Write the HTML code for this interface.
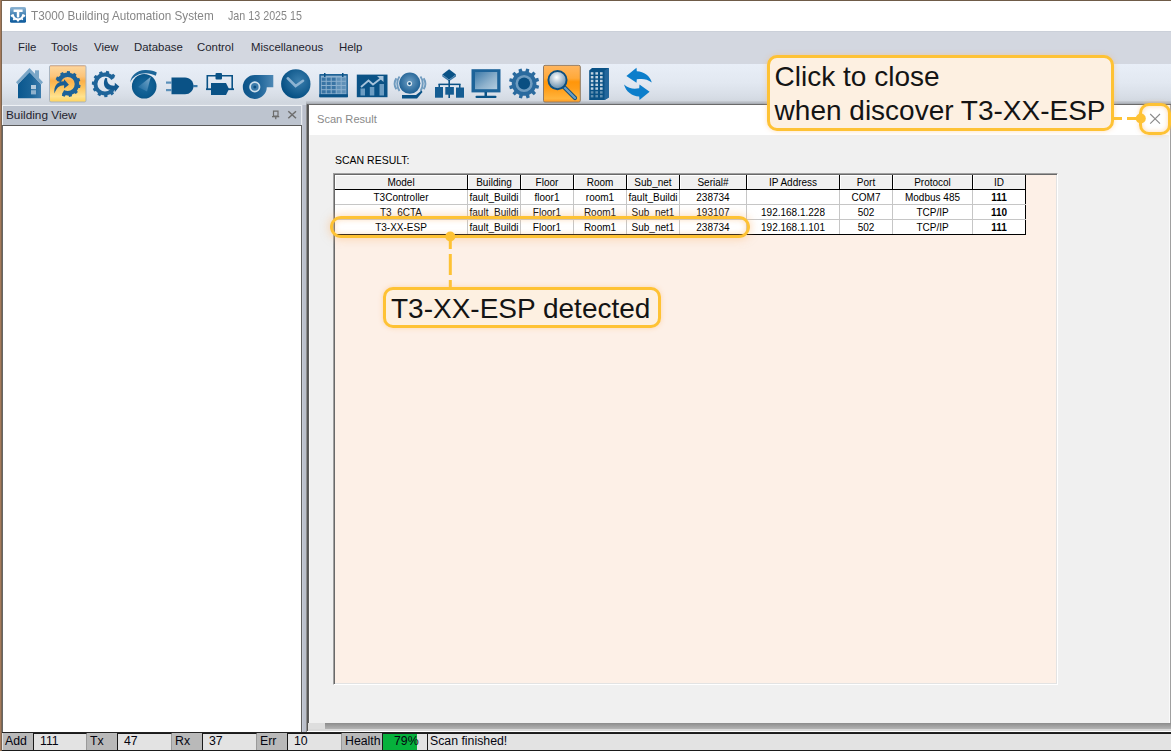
<!DOCTYPE html>
<html><head><meta charset="utf-8">
<style>
*{margin:0;padding:0;box-sizing:border-box}
html,body{width:1171px;height:751px;overflow:hidden;background:#fff;font-family:"Liberation Sans",sans-serif}
.a{position:absolute}
.t{position:absolute;white-space:nowrap;line-height:1}
#desk-top{left:0;top:0;width:1171px;height:1px;background:#6f5b47}
#desk-left{left:0;top:0;width:2px;height:751px;background:linear-gradient(90deg,#a57a5a 50%,#7d6650 50%)}
#title{left:2px;top:1px;width:1169px;height:30px;background:#fff}
#menubar{left:2px;top:31px;width:1169px;height:33px;background:#d3d7e0;border-top:1px solid #cbd0d9}
.menu{font-size:11.4px;color:#1f1f2e;top:42px}
#toolbar{left:2px;top:64px;width:1169px;height:42px;background:linear-gradient(#e8eef8 0,#e7edf6 10%,#e2e8f1 45%,#d8dee7 75%,#d0d6de 92%,#d3d8e0 100%)}
#tbdark{left:306px;top:101px;width:865px;height:4px;background:linear-gradient(#c9ced6,#b3b8bf 50%,#8e9298 100%)}
#bvhead{left:2px;top:105px;width:300px;height:21px;background:#bdc4cf;border-top:1px solid #eef1f5;border-right:1px solid #e6e9ee;border-left:1px solid #eef1f5}
#bvbody{left:2px;top:125px;width:300px;height:607px;background:#fff;border-top:1px solid #5a5a5a;border-right:1px solid #5f5f5f;border-left:1px solid #666}
#splitter{left:302px;top:105px;width:5px;height:627px;background:linear-gradient(90deg,#c5cbd6 0,#c5cbd6 20%,#bbc0cc 20%,#bbc0cc 80%,#8e8e8e 80%)}
#dlg{left:307px;top:104px;width:864px;height:627px;background:#f0f0f0;border-left:1px solid #555;border-top:1px solid #6a6a6a;box-shadow:inset -1px 0 0 #a0a0a0,inset -2px 0 0 #fafafa,inset 1px 0 0 #5c5c5c,inset 2px 0 0 #f6f6f6}
#dlgtitle{left:309px;top:105px;width:860px;height:30px;background:#fff}
#dlgbottom{left:308px;top:723px;width:863px;height:9px;background:linear-gradient(#8c8c8c 0,#a4a4a4 40%,#b4b4b4 66%,#d9d9d9 67%,#d9d9d9 88%,#fff 89%)}
#list{left:333px;top:173px;width:725px;height:512px;background:#fdf0e7;border-top:1px solid #a0a0a0;border-left:1px solid #a0a0a0;border-right:1px solid #fff;border-bottom:1px solid #fff;box-shadow:inset 1px 1px 0 #696969,inset -1px -1px 0 #e3e3e3}
#status{left:2px;top:732px;width:1169px;height:19px;background:#e3e3e3;border-top:1px solid #222}
.tc{position:absolute;height:15px;display:flex;justify-content:center;align-items:center;overflow:hidden;font-size:10px;color:#000;white-space:nowrap;line-height:15px}
.st{top:735px;font-size:12.3px;color:#050510}
#scrl{left:308px;top:723px;width:17px;height:6px;background:#dedede}
.sl{position:absolute;top:733px;height:18px;background:#b7b7b7;font-size:12.5px;color:#10103a;padding-left:2px;line-height:18px}
.sv{position:absolute;top:733px;height:18px;background:#e3e3e3;font-size:12.5px;color:#10103a;line-height:18px;border-left:1px solid #222;border-top:1px solid #222}
</style></head><body>
<div id="desk-top" class="a"></div>
<div id="desk-left" class="a"></div>
<div id="title" class="a"></div>
<div class="t" style="left:31px;top:9.8px;font-size:12.7px;color:#868686;transform:scaleX(0.925);transform-origin:0 0">T3000 Building Automation System</div>
<div class="t" style="left:228px;top:9.8px;font-size:12.7px;color:#868686;transform:scaleX(0.845);transform-origin:0 0">Jan 13 2025 15</div>
<svg class="a" style="left:9px;top:6px" width="19" height="18" viewBox="9 6 19 18">
<defs><linearGradient id="lg" x1="0" y1="0" x2="0" y2="1"><stop offset="0" stop-color="#8fb5d3"/><stop offset="0.45" stop-color="#4a87b8"/><stop offset="1" stop-color="#0a589b"/></linearGradient></defs>
<rect x="10" y="7" width="16" height="15.8" rx="1.6" fill="url(#lg)"/>
<path d="M13.6,9.6 L22.6,9.6 L22.6,12.1 L19.3,12.1 L19.3,17.6 L16.8,17.6 L16.8,12.1 L13.6,12.1Z" fill="#fff"/>
<path d="M24.30,14.20 L24.29,14.53 L24.27,14.86 L25.31,15.36 L25.24,15.74 L25.15,16.12 L25.04,16.49 L24.91,16.85 L23.76,16.76 L23.61,17.06 L23.46,17.35 L23.28,17.63 L23.10,17.90 L22.90,18.16 L22.68,18.42 L23.23,19.43 L22.95,19.70 L22.66,19.95 L22.35,20.19 L21.43,19.48 L21.15,19.66 L20.86,19.81 L20.56,19.96 L20.26,20.08 L19.95,20.19 L19.63,20.29 L19.31,20.36 L18.99,20.42 L18.77,21.56 L18.39,21.59 L18.00,21.60 L17.61,21.59 L17.23,21.56 L17.01,20.42 L16.69,20.36 L16.37,20.29 L16.05,20.19 L15.74,20.08 L15.44,19.96 L15.14,19.81 L14.85,19.66 L13.97,20.41 L13.65,20.19 L13.34,19.95 L13.05,19.70 L12.77,19.43 L13.32,18.42 L13.10,18.16 L12.90,17.90 L12.72,17.63 L12.54,17.35 L12.39,17.06 L12.24,16.76 L11.09,16.85 L10.96,16.49 L10.85,16.12 L10.76,15.74 L10.69,15.36 L11.73,14.86 L11.71,14.53 L11.70,14.20 L13.90,14.20 L13.91,14.41 L13.92,14.63 L13.95,14.84 L13.99,15.05 L14.04,15.26 L14.10,15.47 L14.17,15.67 L14.25,15.87 L14.35,16.06 L14.45,16.25 L14.56,16.43 L14.68,16.61 L14.81,16.78 L14.95,16.94 L15.10,17.10 L15.26,17.25 L15.42,17.39 L15.59,17.52 L15.77,17.64 L15.95,17.75 L16.14,17.85 L16.33,17.95 L16.53,18.03 L16.73,18.10 L16.94,18.16 L17.15,18.21 L17.36,18.25 L17.57,18.28 L17.79,18.29 L18.00,18.30 L18.21,18.29 L18.43,18.28 L18.64,18.25 L18.85,18.21 L19.06,18.16 L19.27,18.10 L19.47,18.03 L19.67,17.95 L19.86,17.85 L20.05,17.75 L20.23,17.64 L20.41,17.52 L20.58,17.39 L20.74,17.25 L20.90,17.10 L21.05,16.94 L21.19,16.78 L21.32,16.61 L21.44,16.43 L21.55,16.25 L21.65,16.06 L21.75,15.87 L21.83,15.67 L21.90,15.47 L21.96,15.26 L22.01,15.05 L22.05,14.84 L22.08,14.63 L22.09,14.41 L22.10,14.20Z" fill="#fff"/>
</svg>
<div id="menubar" class="a"></div>
<div class="t menu" style="left:18px">File</div>
<div class="t menu" style="left:51px">Tools</div>
<div class="t menu" style="left:94px">View</div>
<div class="t menu" style="left:134px">Database</div>
<div class="t menu" style="left:197px">Control</div>
<div class="t menu" style="left:251px">Miscellaneous</div>
<div class="t menu" style="left:339px">Help</div>
<div id="toolbar" class="a"></div>
<div id="tbdark" class="a"></div>
<!--ICONS-->
<svg class="a" style="left:0;top:60px" width="700" height="46" viewBox="0 60 700 46">
<defs>
<linearGradient id="hb1" x1="0" y1="0" x2="0" y2="1">
 <stop offset="0" stop-color="#fdd8a0"/><stop offset="0.3" stop-color="#fcc47a"/><stop offset="0.42" stop-color="#fbb04a"/>
 <stop offset="0.6" stop-color="#fdc45e"/><stop offset="0.85" stop-color="#ffe28e"/><stop offset="1" stop-color="#ffd35c"/>
</linearGradient>
<linearGradient id="hb2" x1="0" y1="0" x2="0" y2="1">
 <stop offset="0" stop-color="#ffb660"/><stop offset="0.35" stop-color="#ffa93a"/><stop offset="0.45" stop-color="#ff960a"/>
 <stop offset="0.62" stop-color="#ff9c16"/><stop offset="0.9" stop-color="#ffb43c"/><stop offset="1" stop-color="#ff9a20"/>
</linearGradient>
<linearGradient id="blu" x1="0" y1="0" x2="0" y2="1">
 <stop offset="0" stop-color="#3a77a6"/><stop offset="1" stop-color="#0d5488"/>
</linearGradient>
<linearGradient id="blu2" x1="0" y1="0" x2="1" y2="1">
 <stop offset="0" stop-color="#2f6f9f"/><stop offset="1" stop-color="#0a4f82"/>
</linearGradient>
<radialGradient id="knob" cx="0.6" cy="0.4" r="0.6">
 <stop offset="0" stop-color="#3b7fae"/><stop offset="1" stop-color="#065084"/>
</radialGradient>
<radialGradient id="bell" cx="0.5" cy="0.45" r="0.55">
 <stop offset="0" stop-color="#6e9fc4"/><stop offset="1" stop-color="#1d5f93"/>
</radialGradient>
<linearGradient id="scr" x1="0" y1="0" x2="1" y2="1">
 <stop offset="0" stop-color="#3d7aa9"/><stop offset="0.6" stop-color="#8fb2cd"/><stop offset="1" stop-color="#b3cde0"/>
</linearGradient>
<radialGradient id="lens" cx="0.45" cy="0.35" r="0.6">
 <stop offset="0" stop-color="#ffffff"/><stop offset="0.5" stop-color="#b5c7d6"/><stop offset="1" stop-color="#6c93b2"/>
</radialGradient>
</defs>
<linearGradient id="hm" x1="0" y1="0" x2="1" y2="0"><stop offset="0" stop-color="#0a578e"/><stop offset="0.6" stop-color="#1c6599"/><stop offset="1" stop-color="#3d7cad"/></linearGradient>
<rect x="35" y="70.3" width="4" height="8" fill="#7aa6c7"/>
<path d="M16,82.2 L29.5,68 L43,82.2 L41.2,84.3 L29.5,72.3 L17.8,84.3Z" fill="#7aa6c7"/>
<path d="M18,84.3 L29.5,72.3 L41,84.3 L41,98.3 L18,98.3Z" fill="url(#hm)"/>
<rect x="31" y="85" width="5" height="4.2" fill="#b5cadb"/><rect x="31" y="90.2" width="5" height="4.2" fill="#8fb1cc"/>
<rect x="49.5" y="65.5" width="36.5" height="36.5" rx="1.5" fill="url(#hb1)" stroke="#a9b4c0" stroke-width="1"/>
<rect x="50" y="65.5" width="35.5" height="1" fill="#e9b184"/>
<mask id="m2" maskUnits="userSpaceOnUse" x="40" y="60" width="60" height="46"><rect x="40" y="60" width="60" height="46" fill="#fff"/><path d="M67.7,84 L48.4,78.8 L46,96 L57.7,101.3Z" fill="#000"/></mask>
<path d="M79.09,84.57 L80.64,85.24 L80.05,88.07 L78.35,88.06 L77.97,88.96 L77.50,89.82 L76.97,90.63 L77.91,92.04 L75.89,94.10 L74.47,93.17 L73.66,93.72 L72.80,94.19 L71.91,94.59 L71.95,96.29 L69.13,96.92 L68.43,95.38 L67.46,95.40 L66.48,95.33 L65.52,95.19 L64.63,96.63 L61.91,95.64 L62.17,93.97 L61.33,93.46 L60.55,92.88 L59.81,92.23 L58.29,92.97 L56.54,90.67 L57.66,89.39 L57.23,88.51 L56.88,87.60 L56.61,86.66 L54.93,86.45 L54.71,83.57 L56.34,83.11 L56.45,82.14 L56.65,81.18 L56.94,80.25 L55.63,79.16 L57.00,76.62 L58.62,77.10 L59.25,76.35 L59.93,75.66 L60.67,75.02 L60.16,73.41 L62.69,72.00 L63.79,73.29 L64.72,73.00 L65.68,72.78 L66.64,72.65 L67.09,71.01 L69.97,71.20 L70.20,72.88 L71.15,73.13 L72.06,73.47 L72.95,73.88 L74.21,72.74 L76.53,74.46 L75.82,76.00 L76.47,76.72 L77.06,77.50 L77.59,78.32 L79.26,78.05 L80.29,80.75 L78.86,81.66 L79.02,82.62 L79.09,83.59Z M60.70,84.00 a7.0,7.0 0 1,0 14.0,0 a7.0,7.0 0 1,0 -14.0,0Z" fill="#1e6399" fill-rule="evenodd" mask="url(#m2)"/>
<path d="M54.5,93.5 C53.5,86 57,81.6 64,81.3 L64.1,79.2 L68.9,84.7 L64.1,88.6 L64.1,85.2 C59,85.3 56.5,88 54.5,93.5Z" fill="#1a5e94"/>
<mask id="m3" maskUnits="userSpaceOnUse" x="80" y="60" width="50" height="46"><rect x="80" y="60" width="50" height="46" fill="#fff"/><path d="M105,84 L122,73 L122,92Z" fill="#000"/></mask>
<path d="M116.17,86.26 L117.80,87.21 L116.78,89.96 L114.93,89.61 L114.41,90.44 L113.82,91.22 L113.17,91.95 L114.04,93.62 L111.69,95.38 L110.32,94.08 L109.44,94.50 L108.52,94.84 L107.58,95.10 L107.40,96.98 L104.47,97.19 L104.02,95.36 L103.06,95.23 L102.10,95.03 L101.17,94.74 L100.00,96.22 L97.42,94.81 L98.04,93.03 L97.29,92.40 L96.60,91.71 L95.97,90.96 L94.19,91.57 L92.78,89.00 L94.26,87.83 L93.97,86.90 L93.77,85.94 L93.64,84.97 L91.81,84.53 L92.02,81.60 L93.90,81.42 L94.16,80.48 L94.50,79.56 L94.92,78.68 L93.62,77.31 L95.38,74.96 L97.06,75.82 L97.78,75.17 L98.57,74.59 L99.40,74.07 L99.04,72.22 L101.79,71.20 L102.74,72.83 L103.70,72.67 L104.68,72.60 L105.65,72.62 L106.36,70.87 L109.22,71.49 L109.14,73.38 L110.03,73.77 L110.89,74.24 L111.70,74.78 L113.24,73.69 L115.31,75.76 L114.22,77.30 L114.76,78.11 L115.23,78.97 L115.62,79.86 L117.51,79.78 L118.13,82.65 L116.38,83.35 L116.40,84.33 L116.33,85.30Z M97.40,84.00 a7.6,7.6 0 1,0 15.2,0 a7.6,7.6 0 1,0 -15.2,0Z" fill="#1f6499" fill-rule="evenodd" mask="url(#m3)"/>
<path d="M105.2,78 C102.5,83 104,89.5 110,89.8 L114.8,89.8 L114.8,92.2 L119.3,86.6 L114.8,82.8 L114.8,85.6 C110,86.2 106.5,83 107.2,78.2Z" fill="#14598f"/>
<radialGradient id="knob2" cx="0.5" cy="0.5" r="0.5"><stop offset="0" stop-color="#1c6a9e"/><stop offset="0.85" stop-color="#0b5a8e"/><stop offset="1" stop-color="#0a5486"/></radialGradient>
<linearGradient id="cone" x1="1" y1="0" x2="0" y2="1"><stop offset="0" stop-color="#9cc0db" stop-opacity="0.9"/><stop offset="1" stop-color="#3f86b8" stop-opacity="0.2"/></linearGradient>
<circle cx="144.2" cy="86.3" r="12.3" fill="url(#knob2)"/>
<path d="M138,87 L150.8,76.8 L147,91.5Z" fill="url(#cone)"/>
<path d="M130.3,82.5 C131,75 137,70.5 145,70 C150,69.8 154.5,71 156.8,72.5 L155.8,75.8 C151,73.2 146,72.6 141,73.8 C135.5,75.2 132,78.5 130.3,82.5Z" fill="#1b6598"/>
<path d="M171.5,77.5 L185,77.5 C190,77.5 193.5,81.5 193.5,86 C193.5,90.5 190,94.3 185,94.3 L171.5,94.3Z" fill="#0a5286"/>
<rect x="166" y="81.5" width="6" height="2.2" fill="#5b90ba"/><rect x="166" y="89" width="6" height="2.2" fill="#5b90ba"/><rect x="193" y="85" width="4.5" height="2.2" fill="#3b7aaa"/>
<path d="M207.3,89.5 L207.3,75.8 L232.2,75.8 L232.2,89.5" fill="none" stroke="#0a5286" stroke-width="1.6"/>
<rect x="206" y="88.3" width="28" height="1.8" fill="#0a5286"/>
<rect x="215.5" y="73" width="6.5" height="6.5" rx="1" fill="#0a5286"/>
<path d="M211,83 L226,83 L229,89 L226,95 L211,95Z" fill="#0a5286"/>
<linearGradient id="fan" x1="0" y1="0" x2="1" y2="0"><stop offset="0" stop-color="#0b5388"/><stop offset="0.5" stop-color="#1d6398"/><stop offset="1" stop-color="#4d88b5"/></linearGradient><path d="M254.8,74.9 L273.3,74.9 L273.3,87.2 L266.8,87.2 A12,12 0 1,1 254.8,74.9Z" fill="url(#fan)"/>
<circle cx="254.8" cy="86.9" r="5.6" fill="#cfe0ec"/><circle cx="254.8" cy="86.9" r="3.8" fill="#3d7cab"/><circle cx="254.8" cy="86.9" r="1.5" fill="#0a4f82"/>
<circle cx="295.8" cy="83.9" r="14.7" fill="url(#knob)"/>
<path d="M287.8,78.3 L295.6,86 L303,80.8" fill="none" stroke="#8db4d3" stroke-width="2.6" stroke-linecap="round"/>
<rect x="319.3" y="74" width="28.6" height="23.2" rx="0.8" fill="#1f6296"/>
<rect x="320.8" y="75.7" width="25.6" height="18.7" fill="#8db1cf"/>
<rect x="321.7" y="77.6" width="4" height="3.2" fill="#2a6a9c" opacity="0.85"/>
<rect x="326.7" y="77.6" width="4" height="3.2" fill="#2a6a9c" opacity="0.85"/>
<rect x="331.7" y="77.6" width="4" height="3.2" fill="#2a6a9c" opacity="0.85"/>
<rect x="336.7" y="77.6" width="4" height="3.2" fill="#2a6a9c" opacity="0.45"/>
<rect x="341.7" y="77.6" width="4" height="3.2" fill="#2a6a9c" opacity="0.45"/>
<rect x="321.7" y="81.8" width="4" height="3.2" fill="#2a6a9c" opacity="0.85"/>
<rect x="326.7" y="81.8" width="4" height="3.2" fill="#2a6a9c" opacity="0.85"/>
<rect x="331.7" y="81.8" width="4" height="3.2" fill="#2a6a9c" opacity="0.85"/>
<rect x="336.7" y="81.8" width="4" height="3.2" fill="#2a6a9c" opacity="0.45"/>
<rect x="341.7" y="81.8" width="4" height="3.2" fill="#2a6a9c" opacity="0.45"/>
<rect x="321.7" y="86.0" width="4" height="3.2" fill="#2a6a9c" opacity="0.85"/>
<rect x="326.7" y="86.0" width="4" height="3.2" fill="#2a6a9c" opacity="0.85"/>
<rect x="331.7" y="86.0" width="4" height="3.2" fill="#2a6a9c" opacity="0.85"/>
<rect x="336.7" y="86.0" width="4" height="3.2" fill="#2a6a9c" opacity="0.45"/>
<rect x="341.7" y="86.0" width="4" height="3.2" fill="#2a6a9c" opacity="0.45"/>
<rect x="321.7" y="90.19999999999999" width="4" height="3.2" fill="#2a6a9c" opacity="0.85"/>
<rect x="326.7" y="90.19999999999999" width="4" height="3.2" fill="#2a6a9c" opacity="0.85"/>
<rect x="331.7" y="90.19999999999999" width="4" height="3.2" fill="#2a6a9c" opacity="0.85"/>
<rect x="336.7" y="90.19999999999999" width="4" height="3.2" fill="#2a6a9c" opacity="0.45"/>
<rect x="341.7" y="90.19999999999999" width="4" height="3.2" fill="#2a6a9c" opacity="0.45"/>
<rect x="319.3" y="94.3" width="28.6" height="2.9" fill="#0a5286"/><rect x="324" y="73" width="1.5" height="4" fill="#0a5286"/><rect x="342" y="73" width="1.5" height="4" fill="#0a5286"/>
<rect x="356.8" y="74.6" width="30.7" height="22.6" fill="#0a5286"/>
<rect x="360.5" y="88.5" width="4.5" height="7" fill="#6b9cc2"/><rect x="369.8" y="87" width="4.5" height="8.5" fill="#6b9cc2"/><rect x="379.5" y="84" width="4.5" height="11.5" fill="#6b9cc2"/>
<path d="M361,87 L368.5,80.5 L373,84.5 L382,77.5" fill="none" stroke="#a6c3db" stroke-width="1.8"/><path d="M377,76 L383.5,76 L383.5,82Z" fill="#a6c3db"/>
<path d="M399.5,76.5 C396.5,80.5 396.5,86.5 399.5,91 M396.3,78.3 C394.3,81.5 394.3,86 396.3,89.3" fill="none" stroke="#6f9bbf" stroke-width="1.9"/><path d="M420.5,76.5 C423.5,80.5 423.5,86.5 420.5,91 M423.7,78.3 C425.7,81.5 425.7,86 423.7,89.3" fill="none" stroke="#6f9bbf" stroke-width="1.9"/>
<circle cx="409.8" cy="83.2" r="10.6" fill="url(#bell)"/>
<circle cx="409.5" cy="83.6" r="2.6" fill="#d9e6ef"/><circle cx="409.5" cy="83.6" r="1.3" fill="#0a4f82"/>
<path d="M402,95 L416,95 L421.5,90.5 L422.5,92 L417,98.5 L402,98.5Z" fill="#0a5286"/>
<path d="M442.3,74.5 L449.1,69.3 L456,74.5 L449.1,79.8Z" fill="#0a5286"/><path d="M442.3,74.5 L442.3,76.5 L449.1,81.3 L456,76.5 L456,74.5 L449.1,79.8Z" fill="#3c79a8"/>
<rect x="448.4" y="80" width="1.6" height="18" fill="#0a5286"/><rect x="438.5" y="83.6" width="22" height="1.5" fill="#0a5286"/>
<rect x="438.5" y="84" width="1.5" height="4" fill="#0a5286"/><rect x="459" y="84" width="1.5" height="4" fill="#0a5286"/>
<rect x="435" y="87" width="8" height="10.7" fill="#145c92"/><rect x="445.3" y="87" width="8.6" height="7.7" fill="#145c92"/><rect x="456" y="87.5" width="8" height="10.2" fill="#145c92"/>
<rect x="471.5" y="69.2" width="29" height="23.2" fill="#1d6399"/><rect x="475" y="72" width="22.2" height="17.2" fill="url(#scr)"/>
<rect x="484.5" y="92" width="2.5" height="4" fill="#0a5286"/><rect x="475.5" y="95.8" width="21" height="2.3" rx="1" fill="#0a5286"/>
<path d="M536.34,84.73 L539.15,85.65 L538.37,88.73 L535.46,88.21 L535.07,89.07 L534.61,89.90 L534.08,90.68 L536.06,92.89 L533.84,95.17 L531.58,93.26 L530.81,93.81 L530.00,94.29 L529.16,94.71 L529.76,97.61 L526.71,98.48 L525.70,95.70 L524.76,95.78 L523.81,95.80 L522.87,95.74 L521.95,98.55 L518.87,97.77 L519.39,94.86 L518.53,94.47 L517.70,94.01 L516.92,93.48 L514.71,95.46 L512.43,93.24 L514.34,90.98 L513.79,90.21 L513.31,89.40 L512.89,88.56 L509.99,89.16 L509.12,86.11 L511.90,85.10 L511.82,84.16 L511.80,83.21 L511.86,82.27 L509.05,81.35 L509.83,78.27 L512.74,78.79 L513.13,77.93 L513.59,77.10 L514.12,76.32 L512.14,74.11 L514.36,71.83 L516.62,73.74 L517.39,73.19 L518.20,72.71 L519.04,72.29 L518.44,69.39 L521.49,68.52 L522.50,71.30 L523.44,71.22 L524.39,71.20 L525.33,71.26 L526.25,68.45 L529.33,69.23 L528.81,72.14 L529.67,72.53 L530.50,72.99 L531.28,73.52 L533.49,71.54 L535.77,73.76 L533.86,76.02 L534.41,76.79 L534.89,77.60 L535.31,78.44 L538.21,77.84 L539.08,80.89 L536.30,81.90 L536.38,82.84 L536.40,83.79Z" fill="#2a6a9e"/>
<circle cx="524.1" cy="83.5" r="8.6" fill="#6f9cc0"/><circle cx="524.1" cy="83.5" r="6" fill="#0a4f82"/>
<rect x="543.5" y="65.3" width="36.8" height="36.8" rx="1.5" fill="url(#hb2)" stroke="#8d7a66" stroke-width="1"/>
<path d="M563,86 L575,98" stroke="#0f4d7c" stroke-width="4.2" stroke-linecap="round"/><path d="M563,86 L575,98" stroke="#6a9ec4" stroke-width="2.4" stroke-linecap="round"/>
<circle cx="557.5" cy="80.1" r="9.1" fill="url(#lens)" stroke="#0d4f80" stroke-width="1.9"/>
<path d="M589.2,70.5 L592,68 L608.8,68 L608.8,97.5 L604.5,99.9 L589.2,99.9Z" fill="#0a5286"/><path d="M604.5,70.5 L608.8,68 L608.8,97.5 L604.5,99.9Z" fill="#23669b"/>
<rect x="590.8" y="72.2" width="2.6" height="2.4" fill="#c8d9e6" opacity="0.95"/>
<rect x="595.4" y="72.2" width="2.6" height="2.4" fill="#c8d9e6" opacity="0.95"/>
<rect x="600.0" y="72.2" width="2.6" height="2.4" fill="#c8d9e6" opacity="0.95"/>
<rect x="590.8" y="76.0" width="2.6" height="2.4" fill="#c8d9e6" opacity="0.95"/>
<rect x="595.4" y="76.0" width="2.6" height="2.4" fill="#c8d9e6" opacity="0.95"/>
<rect x="600.0" y="76.0" width="2.6" height="2.4" fill="#c8d9e6" opacity="0.95"/>
<rect x="590.8" y="79.8" width="2.6" height="2.4" fill="#c8d9e6" opacity="0.95"/>
<rect x="595.4" y="79.8" width="2.6" height="2.4" fill="#c8d9e6" opacity="0.95"/>
<rect x="600.0" y="79.8" width="2.6" height="2.4" fill="#c8d9e6" opacity="0.95"/>
<rect x="590.8" y="83.6" width="2.6" height="2.4" fill="#c8d9e6" opacity="0.95"/>
<rect x="595.4" y="83.6" width="2.6" height="2.4" fill="#c8d9e6" opacity="0.95"/>
<rect x="600.0" y="83.6" width="2.6" height="2.4" fill="#c8d9e6" opacity="0.95"/>
<rect x="590.8" y="87.4" width="2.6" height="2.4" fill="#c8d9e6" opacity="0.95"/>
<rect x="595.4" y="87.4" width="2.6" height="2.4" fill="#c8d9e6" opacity="0.95"/>
<rect x="600.0" y="87.4" width="2.6" height="2.4" fill="#c8d9e6" opacity="0.95"/>
<rect x="590.8" y="91.2" width="2.6" height="2.4" fill="#c8d9e6" opacity="0.45"/>
<rect x="595.4" y="91.2" width="2.6" height="2.4" fill="#c8d9e6" opacity="0.45"/>
<rect x="600.0" y="91.2" width="2.6" height="2.4" fill="#c8d9e6" opacity="0.45"/>
<rect x="590.8" y="95.0" width="2.6" height="2.4" fill="#c8d9e6" opacity="0.45"/>
<rect x="595.4" y="95.0" width="2.6" height="2.4" fill="#c8d9e6" opacity="0.45"/>
<rect x="600.0" y="95.0" width="2.6" height="2.4" fill="#c8d9e6" opacity="0.45"/>
<path d="M626.4,76 L636.5,67.8 L636.8,71.3 C644,71.5 650,76 651.8,82.5 C647,78.5 642,78.5 636.8,79.3 L636.5,82.8Z" fill="#0c7ecb"/>
<path d="M649.6,91.7 L639.5,99.9 L639.2,96.4 C632,96.2 626,91.8 624,84.5 C629,89 634,89.2 639.2,88.3 L639.5,84.5Z" fill="#0c7ecb"/>
</svg>
<!--/ICONS-->
<div id="bvhead" class="a"></div>
<div class="t" style="left:6px;top:110px;font-size:11.8px;color:#1f1f2e">Building View</div>
<div id="bvbody" class="a"></div>
<div id="splitter" class="a"></div>
<div id="dlg" class="a"></div>
<div id="dlgtitle" class="a"></div>
<div class="t" style="left:317px;top:114px;font-size:11.1px;color:#8a8a8a">Scan Result</div>
<div class="t" style="left:335px;top:155px;font-size:10.5px;color:#000">SCAN RESULT:</div>
<div id="list" class="a"></div>
<!--TABLE-->
<div class="a" style="left:335px;top:175px;width:691px;height:60px;background:#fff"></div>
<div class="a" style="left:335px;top:175px;width:691px;height:15px;background:#f0f0f0"></div>
<div class="a" style="left:335px;top:175px;width:132px;height:1px;background:#fff"></div>
<div class="a" style="left:335px;top:175px;width:1px;height:14px;background:#fff"></div>
<div class="a" style="left:467px;top:175px;width:1px;height:15px;background:#000"></div>
<div class="a" style="left:335px;top:189px;width:133px;height:1px;background:#000"></div>
<div class="a" style="left:468px;top:175px;width:52px;height:1px;background:#fff"></div>
<div class="a" style="left:468px;top:175px;width:1px;height:14px;background:#fff"></div>
<div class="a" style="left:520px;top:175px;width:1px;height:15px;background:#000"></div>
<div class="a" style="left:468px;top:189px;width:53px;height:1px;background:#000"></div>
<div class="a" style="left:521px;top:175px;width:52px;height:1px;background:#fff"></div>
<div class="a" style="left:521px;top:175px;width:1px;height:14px;background:#fff"></div>
<div class="a" style="left:573px;top:175px;width:1px;height:15px;background:#000"></div>
<div class="a" style="left:521px;top:189px;width:53px;height:1px;background:#000"></div>
<div class="a" style="left:574px;top:175px;width:52px;height:1px;background:#fff"></div>
<div class="a" style="left:574px;top:175px;width:1px;height:14px;background:#fff"></div>
<div class="a" style="left:626px;top:175px;width:1px;height:15px;background:#000"></div>
<div class="a" style="left:574px;top:189px;width:53px;height:1px;background:#000"></div>
<div class="a" style="left:627px;top:175px;width:52px;height:1px;background:#fff"></div>
<div class="a" style="left:627px;top:175px;width:1px;height:14px;background:#fff"></div>
<div class="a" style="left:679px;top:175px;width:1px;height:15px;background:#000"></div>
<div class="a" style="left:627px;top:189px;width:53px;height:1px;background:#000"></div>
<div class="a" style="left:680px;top:175px;width:66px;height:1px;background:#fff"></div>
<div class="a" style="left:680px;top:175px;width:1px;height:14px;background:#fff"></div>
<div class="a" style="left:746px;top:175px;width:1px;height:15px;background:#000"></div>
<div class="a" style="left:680px;top:189px;width:67px;height:1px;background:#000"></div>
<div class="a" style="left:747px;top:175px;width:92px;height:1px;background:#fff"></div>
<div class="a" style="left:747px;top:175px;width:1px;height:14px;background:#fff"></div>
<div class="a" style="left:839px;top:175px;width:1px;height:15px;background:#000"></div>
<div class="a" style="left:747px;top:189px;width:93px;height:1px;background:#000"></div>
<div class="a" style="left:840px;top:175px;width:52px;height:1px;background:#fff"></div>
<div class="a" style="left:840px;top:175px;width:1px;height:14px;background:#fff"></div>
<div class="a" style="left:892px;top:175px;width:1px;height:15px;background:#000"></div>
<div class="a" style="left:840px;top:189px;width:53px;height:1px;background:#000"></div>
<div class="a" style="left:893px;top:175px;width:79px;height:1px;background:#fff"></div>
<div class="a" style="left:893px;top:175px;width:1px;height:14px;background:#fff"></div>
<div class="a" style="left:972px;top:175px;width:1px;height:15px;background:#000"></div>
<div class="a" style="left:893px;top:189px;width:80px;height:1px;background:#000"></div>
<div class="a" style="left:973px;top:175px;width:52px;height:1px;background:#fff"></div>
<div class="a" style="left:973px;top:175px;width:1px;height:14px;background:#fff"></div>
<div class="a" style="left:1025px;top:175px;width:1px;height:15px;background:#000"></div>
<div class="a" style="left:973px;top:189px;width:53px;height:1px;background:#000"></div>
<div class="a" style="left:467px;top:190px;width:1px;height:45px;background:#c6c6c6"></div>
<div class="a" style="left:520px;top:190px;width:1px;height:45px;background:#c6c6c6"></div>
<div class="a" style="left:573px;top:190px;width:1px;height:45px;background:#c6c6c6"></div>
<div class="a" style="left:626px;top:190px;width:1px;height:45px;background:#c6c6c6"></div>
<div class="a" style="left:679px;top:190px;width:1px;height:45px;background:#c6c6c6"></div>
<div class="a" style="left:746px;top:190px;width:1px;height:45px;background:#c6c6c6"></div>
<div class="a" style="left:839px;top:190px;width:1px;height:45px;background:#c6c6c6"></div>
<div class="a" style="left:892px;top:190px;width:1px;height:45px;background:#c6c6c6"></div>
<div class="a" style="left:972px;top:190px;width:1px;height:45px;background:#c6c6c6"></div>
<div class="a" style="left:1025px;top:190px;width:1px;height:45px;background:#000"></div>
<div class="a" style="left:335px;top:204px;width:691px;height:1px;background:#c6c6c6"></div>
<div class="a" style="left:335px;top:219px;width:691px;height:1px;background:#c6c6c6"></div>
<div class="a" style="left:335px;top:234px;width:691px;height:1px;background:#000"></div>
<div class="tc" style="left:335px;top:175px;width:132px;"><span>Model</span></div>
<div class="tc" style="left:468px;top:175px;width:52px;"><span>Building</span></div>
<div class="tc" style="left:521px;top:175px;width:52px;"><span>Floor</span></div>
<div class="tc" style="left:574px;top:175px;width:52px;"><span>Room</span></div>
<div class="tc" style="left:627px;top:175px;width:52px;"><span>Sub_net</span></div>
<div class="tc" style="left:680px;top:175px;width:66px;"><span>Serial#</span></div>
<div class="tc" style="left:747px;top:175px;width:92px;"><span>IP Address</span></div>
<div class="tc" style="left:840px;top:175px;width:52px;"><span>Port</span></div>
<div class="tc" style="left:893px;top:175px;width:79px;"><span>Protocol</span></div>
<div class="tc" style="left:973px;top:175px;width:52px;"><span>ID</span></div>
<div class="tc" style="left:335px;top:190px;width:132px;"><span>T3Controller</span></div>
<div class="tc" style="left:468px;top:190px;width:52px;"><span>fault_Buildi</span></div>
<div class="tc" style="left:521px;top:190px;width:52px;"><span>floor1</span></div>
<div class="tc" style="left:574px;top:190px;width:52px;"><span>room1</span></div>
<div class="tc" style="left:627px;top:190px;width:52px;"><span>fault_Buildi</span></div>
<div class="tc" style="left:680px;top:190px;width:66px;"><span>238734</span></div>
<div class="tc" style="left:840px;top:190px;width:52px;"><span>COM7</span></div>
<div class="tc" style="left:893px;top:190px;width:79px;"><span>Modbus 485</span></div>
<div class="tc" style="left:973px;top:190px;width:52px;font-weight:bold;"><span>111</span></div>
<div class="tc" style="left:335px;top:205px;width:132px;"><span>T3_6CTA</span></div>
<div class="tc" style="left:468px;top:205px;width:52px;"><span>fault_Buildi</span></div>
<div class="tc" style="left:521px;top:205px;width:52px;"><span>Floor1</span></div>
<div class="tc" style="left:574px;top:205px;width:52px;"><span>Room1</span></div>
<div class="tc" style="left:627px;top:205px;width:52px;"><span>Sub_net1</span></div>
<div class="tc" style="left:680px;top:205px;width:66px;"><span>193107</span></div>
<div class="tc" style="left:747px;top:205px;width:92px;"><span>192.168.1.228</span></div>
<div class="tc" style="left:840px;top:205px;width:52px;"><span>502</span></div>
<div class="tc" style="left:893px;top:205px;width:79px;"><span>TCP/IP</span></div>
<div class="tc" style="left:973px;top:205px;width:52px;font-weight:bold;"><span>110</span></div>
<div class="tc" style="left:335px;top:220px;width:132px;"><span>T3-XX-ESP</span></div>
<div class="tc" style="left:468px;top:220px;width:52px;"><span>fault_Buildi</span></div>
<div class="tc" style="left:521px;top:220px;width:52px;"><span>Floor1</span></div>
<div class="tc" style="left:574px;top:220px;width:52px;"><span>Room1</span></div>
<div class="tc" style="left:627px;top:220px;width:52px;"><span>Sub_net1</span></div>
<div class="tc" style="left:680px;top:220px;width:66px;"><span>238734</span></div>
<div class="tc" style="left:747px;top:220px;width:92px;"><span>192.168.1.101</span></div>
<div class="tc" style="left:840px;top:220px;width:52px;"><span>502</span></div>
<div class="tc" style="left:893px;top:220px;width:79px;"><span>TCP/IP</span></div>
<div class="tc" style="left:973px;top:220px;width:52px;font-weight:bold;"><span>111</span></div>
<!--/TABLE-->
<div id="dlgbottom" class="a"></div>
<div id="scrl" class="a"></div>
<div id="status" class="a"></div>
<!--STATUS-->
<div class="a" style="left:3px;top:733px;width:30px;height:18px;background:#b9b9b9"></div>
<div class="t st" style="left:5px">Add</div>
<div class="a" style="left:33px;top:733px;width:54px;height:18px;background:#e3e3e3;border-left:1px solid #1a1a1a;border-top:1px solid #1a1a1a;border-right:1px solid #9a9a9a"></div>
<div class="t st" style="left:40px">111</div>
<div class="a" style="left:87px;top:733px;width:30px;height:18px;background:#b9b9b9"></div>
<div class="t st" style="left:90px">Tx</div>
<div class="a" style="left:117px;top:733px;width:55px;height:18px;background:#e3e3e3;border-left:1px solid #1a1a1a;border-top:1px solid #1a1a1a;border-right:1px solid #9a9a9a"></div>
<div class="t st" style="left:124px">47</div>
<div class="a" style="left:172px;top:733px;width:30px;height:18px;background:#b9b9b9"></div>
<div class="t st" style="left:175px">Rx</div>
<div class="a" style="left:202px;top:733px;width:55px;height:18px;background:#e3e3e3;border-left:1px solid #1a1a1a;border-top:1px solid #1a1a1a;border-right:1px solid #9a9a9a"></div>
<div class="t st" style="left:209px">37</div>
<div class="a" style="left:257px;top:733px;width:30px;height:18px;background:#b9b9b9"></div>
<div class="t st" style="left:260px">Err</div>
<div class="a" style="left:287px;top:733px;width:55px;height:18px;background:#e3e3e3;border-left:1px solid #1a1a1a;border-top:1px solid #1a1a1a;border-right:1px solid #9a9a9a"></div>
<div class="t st" style="left:294px">10</div>
<div class="a" style="left:342px;top:733px;width:40px;height:18px;background:#b9b9b9"></div>
<div class="t st" style="left:345px">Health</div>
<div class="a" style="left:382px;top:733px;width:45px;height:18px;background:#e3e3e3;border-left:1px solid #1a1a1a;border-top:1px solid #1a1a1a"></div>
<div class="a" style="left:383px;top:734px;width:34px;height:17px;background:#06b13c"></div>
<div class="t st" style="left:394px">79%</div>
<div class="a" style="left:427px;top:733px;width:744px;height:18px;background:#e3e3e3;border-left:1px solid #1a1a1a;border-top:1px solid #1a1a1a"></div>
<div class="t st" style="left:430px">Scan finished!</div>
<div class="a" style="left:2px;top:750px;width:1169px;height:1px;background:#1a1a1a"></div>
<!--/STATUS-->
<!--CALLOUTS-->
<svg class="a" style="left:268px;top:106px" width="34" height="16" viewBox="268 106 34 16">
<path d="M273.5,111.2 L278,111.2 L278,116 L273.5,116Z" fill="none" stroke="#6d6d6d" stroke-width="1.2"/>
<rect x="272" y="116" width="7.2" height="1.3" fill="#6d6d6d"/><rect x="275.1" y="117" width="1.3" height="2.2" fill="#6d6d6d"/>
<path d="M288.3,111.2 L296,118.2 M296,111.2 L288.3,118.2" stroke="#6d6d6d" stroke-width="1.5"/>
</svg>
<div class="a" style="left:330px;top:216px;width:420px;height:22px;border:3px solid #fec234;border-radius:11px;box-shadow:0 0 8px 1px rgba(252,185,120,.5),inset 0 0 6px rgba(252,190,125,.6)"></div>
<svg class="a" style="left:440px;top:228px" width="22" height="62" viewBox="440 228 22 62">
<circle cx="450.3" cy="236.5" r="5" fill="#fec234"/>
<path d="M450.3,236 L450.3,249 M450.3,254 L450.3,275 M450.3,280 L450.3,288" stroke="#fec234" stroke-width="3"/>
</svg>
<div class="a" style="left:383px;top:287px;width:278px;height:41px;background:#fdf0e1;border:3px solid #fec234;border-radius:10px;box-shadow:0 0 5px rgba(253,180,100,.45)"></div>
<div class="t" style="left:391px;top:294.5px;font-size:28px;color:#141414">T3-XX-ESP detected</div>
<div class="a" style="left:767px;top:55px;width:347px;height:76px;background:#fdf0e1;border:3px solid #fec234;border-radius:10px;box-shadow:0 0 5px rgba(253,180,100,.45)"></div>
<div class="t" style="left:774.6px;top:59.8px;font-size:28px;line-height:34px;color:#141414">Click to close<br>when discover T3-XX-ESP</div>
<svg class="a" style="left:1110px;top:108px" width="40" height="20" viewBox="1110 108 40 20">
<path d="M1113.5,118.5 L1122,118.5 M1127,118.5 L1140,118.5" stroke="#fec234" stroke-width="3"/>
</svg>
<div class="a" style="left:1139px;top:103px;width:32px;height:32px;border:3px solid #fec234;border-radius:10px;box-shadow:0 0 4px rgba(253,180,100,.5),inset 0 0 5px rgba(253,190,120,.6)"></div>
<svg class="a" style="left:1134px;top:110px" width="30" height="18" viewBox="1134 110 30 18">
<circle cx="1140.8" cy="118.5" r="5" fill="#fec234"/>
<path d="M1150.2,114 L1160,123.6 M1160,114 L1150.2,123.6" stroke="#8a8a8a" stroke-width="1.1"/>
</svg>

<!--/CALLOUTS-->
</body></html>
